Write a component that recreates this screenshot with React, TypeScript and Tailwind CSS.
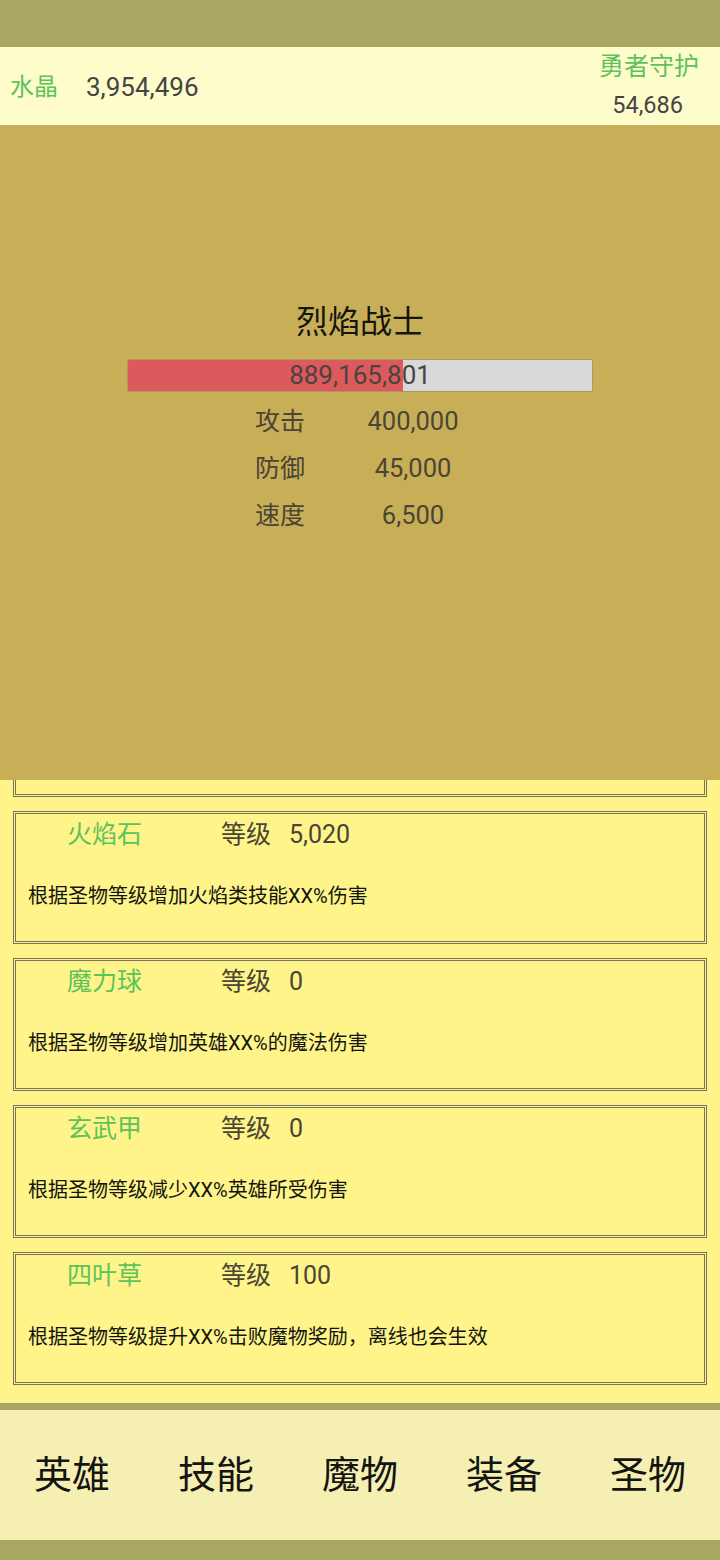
import React from "react";

const F = { fontFamily: 'Roboto, "Noto Sans CJK SC", sans-serif' };

const items = [
  { name: "火焰石", level: "5,020", desc: "根据圣物等级增加火焰类技能XX%伤害" },
  { name: "魔力球", level: "0", desc: "根据圣物等级增加英雄XX%的魔法伤害" },
  { name: "玄武甲", level: "0", desc: "根据圣物等级减少XX%英雄所受伤害" },
  { name: "四叶草", level: "100", desc: "根据圣物等级提升XX%击败魔物奖励，离线也会生效" },
];

const stats = [
  ["攻击", "400,000"],
  ["防御", "45,000"],
  ["速度", "6,500"],
];

const tabs = ["英雄", "技能", "魔物", "装备", "圣物"];

export default function App() {
  return (
    <div className="w-[720px] h-[1560px] flex flex-col bg-[#fff48a] overflow-hidden" style={F}>
      <div className="h-[47px] bg-[#a9a563] shrink-0" />
      <div className="h-[78px] bg-[#fffccb] shrink-0 flex items-center justify-between pl-[10px] pr-[22px]">
        <div className="flex items-center mt-[2px]">
          <span className="text-[24px] text-[#5cc35c] leading-none">水晶</span>
          <span className="text-[26px] text-[#444] leading-none ml-[28px]">3,954,496</span>
        </div>
        <div className="flex flex-col items-end">
          <span className="text-[25px] text-[#5cc35c] leading-[30px] mr-[-1px]">勇者守护</span>
          <span className="text-[23.5px] text-[#444] leading-[30px] mt-[8px] mr-[15px]">54,686</span>
        </div>
      </div>
      <div className="h-[655px] bg-[#c9ae58] shrink-0 flex flex-col items-center pt-[177px]">
        <div className="text-[32px] leading-[40px] text-[#151510]">烈焰战士</div>
        <div className="relative mt-[17px] w-[466px] h-[33px] bg-[#d9d9d9] rounded-[2px] border border-[#a89a60] overflow-hidden">
          <div className="absolute left-0 top-0 bottom-0 w-[59.3%] bg-[#dc5a5c]" />
          <div className="absolute inset-0 flex items-center justify-center text-[26px] text-[#4a4440]">889,165,801</div>
        </div>
        <div className="mt-[6px] w-full flex flex-col">
          {stats.map(([l, v]) => (
            <div key={l} className="h-[47px] flex items-center pl-[255px]">
              <span className="w-[96px] text-[25px] text-[#4a4535]">{l}</span>
              <span className="w-[124px] text-center text-[25.5px] text-[#4a4535]">{v}</span>
            </div>
          ))}
        </div>
      </div>
      <div className="h-[623px] shrink-0 bg-[#fff48a] flex flex-col px-[13px]">
        <div className="h-[17px] border-[3px] border-t-0 border-double border-[#76755f] shrink-0" />
        {items.map((it) => (
          <div key={it.name} className="mt-[14px] h-[133px] shrink-0 border-[3px] border-double border-[#76755f] bg-[#fff48a] flex flex-col">
            <div className="flex items-center h-[40px] mt-[1px]">
              <span className="ml-[51px] w-[154px] text-[25px] text-[#5cc35c]">{it.name}</span>
              <span className="text-[25px] text-[#4a4535]">等级</span>
              <span className="ml-[18px] text-[25px] text-[#4a4535]">{it.level}</span>
            </div>
            <div className="ml-[12px] mt-[29px] text-[20px] leading-[24px] text-[#141410]">{it.desc}</div>
          </div>
        ))}
      </div>
      <div className="h-[7px] bg-[#aaa565] shrink-0" />
      <div className="h-[130px] bg-[#f6efb4] shrink-0 grid grid-cols-5 items-center">
        {tabs.map((t) => (
          <div key={t} className="text-center text-[38px] text-[#141410] leading-none">{t}</div>
        ))}
      </div>
      <div className="flex-1 bg-[#a9a563]" />
    </div>
  );
}
